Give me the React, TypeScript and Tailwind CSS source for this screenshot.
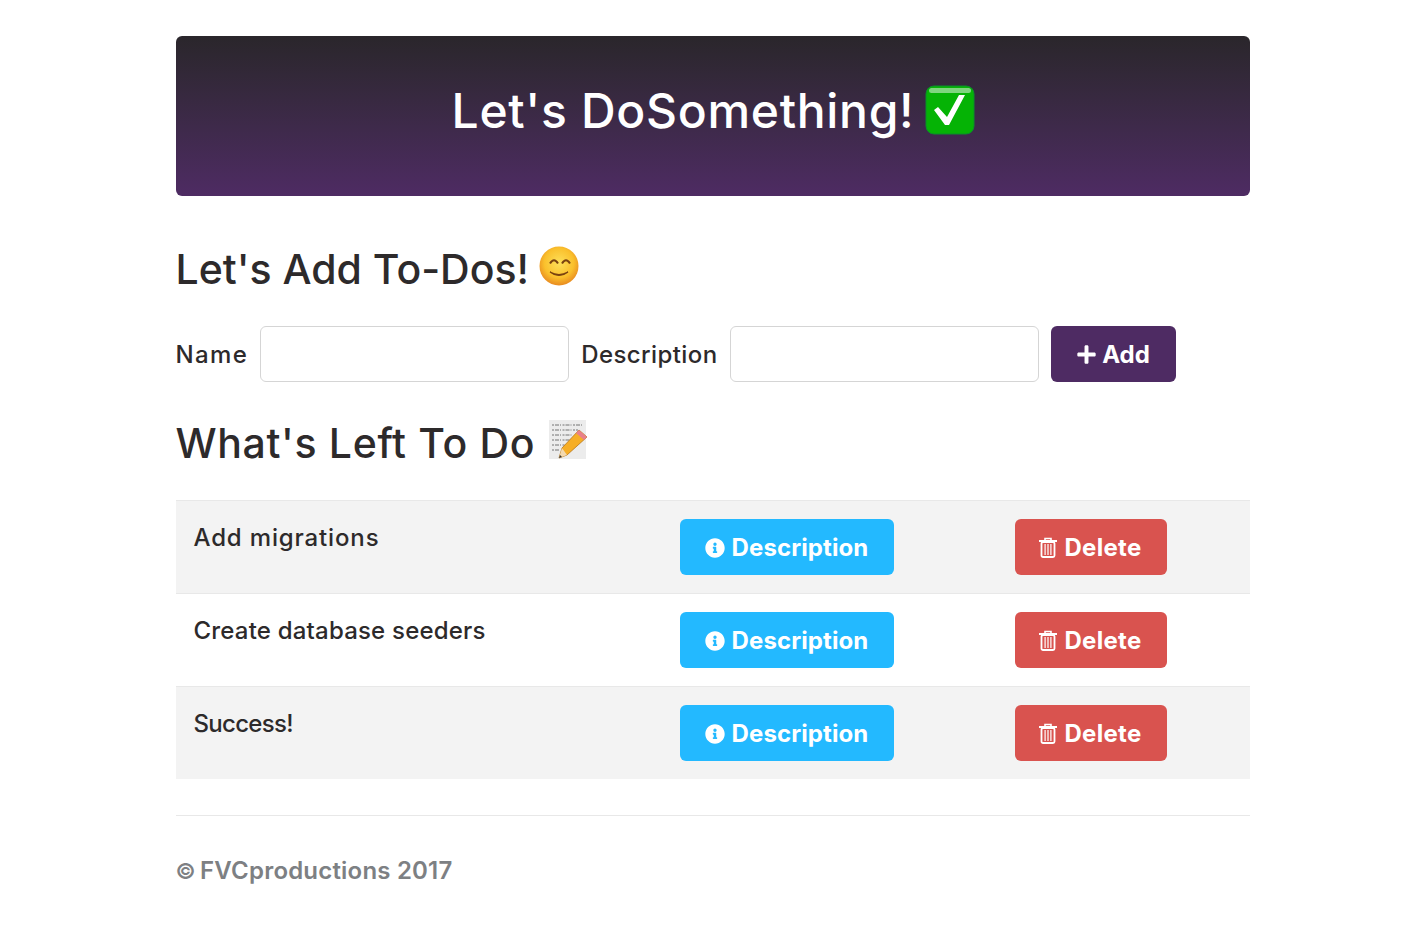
import { FaInfoCircle, FaPlus } from 'react-icons/fa';

const todos = [
  { name: 'Add migrations', tracking: 'tracking-[0.85px]', height: 'h-[93px]' },
  { name: 'Create database seeders', tracking: 'tracking-[0.2px]', height: 'h-[93px]' },
  { name: 'Success!', tracking: 'tracking-[-0.7px]', height: 'h-[92px]' },
];

function CheckEmoji() {
  return (
    <svg width="50" height="50" viewBox="0 0 50 50" className="shrink-0">
      <rect x="1" y="1" width="48" height="48" rx="8" fill="#05b305" stroke="#0a8f2a" />
      <rect x="4" y="3" width="42" height="5" rx="2.5" fill="#7fd67f" />
      <path d="M9 25 L13 22 L22 32 L34 10 L40 10 L24 40 L20 40 Z" fill="#fff" />
    </svg>
  );
}

function SmileEmoji() {
  return (
    <svg width="40" height="40" viewBox="0 0 40 40" className="shrink-0">
      <defs>
        <radialGradient id="face" cx="50%" cy="42%" r="58%">
          <stop offset="0%" stopColor="#fde05a" />
          <stop offset="65%" stopColor="#fac02c" />
          <stop offset="100%" stopColor="#e88a20" />
        </radialGradient>
      </defs>
      <circle cx="20" cy="20" r="19.5" fill="url(#face)" />
      <path d="M11 17.5 Q15 11 19 17.5" stroke="#7a4310" strokeWidth="2" fill="none" />
      <path d="M23 17.5 Q27 11 31 17.5" stroke="#7a4310" strokeWidth="2" fill="none" />
      <path d="M11 26 Q20 31 29 26 Q20 33 11 26 Z" fill="#7a4310" stroke="#7a4310" strokeWidth="1.2" />
    </svg>
  );
}

function MemoEmoji() {
  return (
    <svg width="38" height="42" viewBox="0 0 38 42" className="shrink-0">
      <rect x="0" y="1" width="37" height="39" fill="#ececec" />
      <g stroke="#555" strokeWidth="0.8" strokeDasharray="2 1 4 1 1 1.5">
        <path d="M3 6 H33" />
        <path d="M3 11 H29" />
        <path d="M3 16 H24" />
        <path d="M3 21 H22" />
        <path d="M3 26 H16" />
        <path d="M3 31 H11" />
      </g>
      <path d="M30 11 L38 18 L18 36 L10 39 L13 29 Z" fill="#f6ae26" stroke="#b8761a" strokeWidth="0.8" />
      <path d="M30 11 L38 18 L35 21 L27 14 Z" fill="#e8808a" />
      <path d="M13 29 L18 36 L10 39 Z" fill="#f3d9b0" />
      <path d="M11 36 L13 38 L10 39 Z" fill="#333" />
    </svg>
  );
}

function TrashIcon() {
  return (
    <svg width="18" height="21" viewBox="0 0 18 21" fill="#fff" className="shrink-0">
      <path d="M6 4 V1.5 H12 V4" fill="none" stroke="#fff" strokeWidth="1.6" />
      <rect x="0" y="3" width="18" height="2" />
      <rect x="2.5" y="5" width="13" height="15" rx="1.5" fill="none" stroke="#fff" strokeWidth="1.8" />
      <rect x="5.5" y="7" width="1.2" height="11" />
      <rect x="8.4" y="7" width="1.2" height="11" />
      <rect x="11.3" y="7" width="1.2" height="11" />
    </svg>
  );
}

export default function App() {
  return (
    <div className="min-h-[936px] bg-white pt-9 font-['Inter','Liberation_Sans',sans-serif] text-[#2d2a2b]">
      <div className="mx-auto w-[1074px]">
        <header className="flex h-40 items-center justify-center gap-[11px] rounded-md bg-gradient-to-b from-[#2a262b] to-[#4e2b63] pb-[12px] pl-[2px] text-white">
          <h1 className="pt-[2px] text-[48px] leading-none font-medium tracking-[0.7px]">Let's DoSomething!</h1>
          <CheckEmoji />
        </header>

        <div className="mt-[50px] flex h-[46px] items-center gap-[10px]">
          <h2 className="text-[41px] leading-none font-medium tracking-[0px]">Let's Add To-Dos!</h2>
          <div className="mb-[6px]">
            <SmileEmoji />
          </div>
        </div>

        <form className="mt-[34px] flex items-center gap-3 text-[24px] font-medium">
          <label className="pt-[2px] tracking-[1.4px]">Name</label>
          <input className="h-14 w-[309px] rounded-md border border-[#d5d5d5] bg-white" />
          <label className="pt-[2px] tracking-[0.4px]">Description</label>
          <input className="h-14 w-[309px] rounded-md border border-[#d5d5d5] bg-white" />
          <button type="button" className="flex h-14 w-[125px] items-center justify-center gap-[5px] rounded-md bg-[#4e2b63] pt-px font-bold text-white">
            <FaPlus size={21} /> Add
          </button>
        </form>

        <div className="mt-[38px] flex h-[46px] items-center gap-[14px]">
          <h2 className="text-[41px] leading-none font-medium tracking-[0.65px]">What's Left To Do</h2>
          <div className="mb-[7px]">
            <MemoEmoji />
          </div>
        </div>

        <table className="mt-[34px] w-full table-fixed text-[24px] font-medium">
          <tbody>
            {todos.map((todo, i) => (
              <tr key={todo.name} className={i % 2 === 0 ? 'bg-[#f3f3f3]' : 'bg-white'}>
                <td className={`${todo.height} w-[486px] border-t border-[#e8e8e8] px-[18px] pt-[19px] align-top leading-[36px] ${todo.tracking}`}>{todo.name}</td>
                <td className="w-[335px] border-t border-[#e8e8e8] px-[18px] pt-[18px] align-top">
                  <button type="button" className="flex h-14 w-[214px] items-center justify-center gap-[7px] rounded-md bg-[#23b9ff] pt-px font-bold tracking-[0.1px] text-white">
                    <FaInfoCircle size={20} /> Description
                  </button>
                </td>
                <td className="border-t border-[#e8e8e8] px-[18px] pt-[18px] align-top">
                  <button type="button" className="flex h-14 w-[152px] items-center justify-center gap-[7px] rounded-md bg-[#d9534f] pt-px font-bold tracking-[0.3px] text-white">
                    <TrashIcon /> Delete
                  </button>
                </td>
              </tr>
            ))}
          </tbody>
        </table>

        <footer className="mt-9 border-t border-[#e8e8e8] pt-[37px] text-[24px] leading-[36px] font-semibold tracking-[0.2px] text-[#7d8083]">
          <span className="mr-[-2px] text-[22px]">©</span> FVCproductions 2017
        </footer>
      </div>
    </div>
  );
}
